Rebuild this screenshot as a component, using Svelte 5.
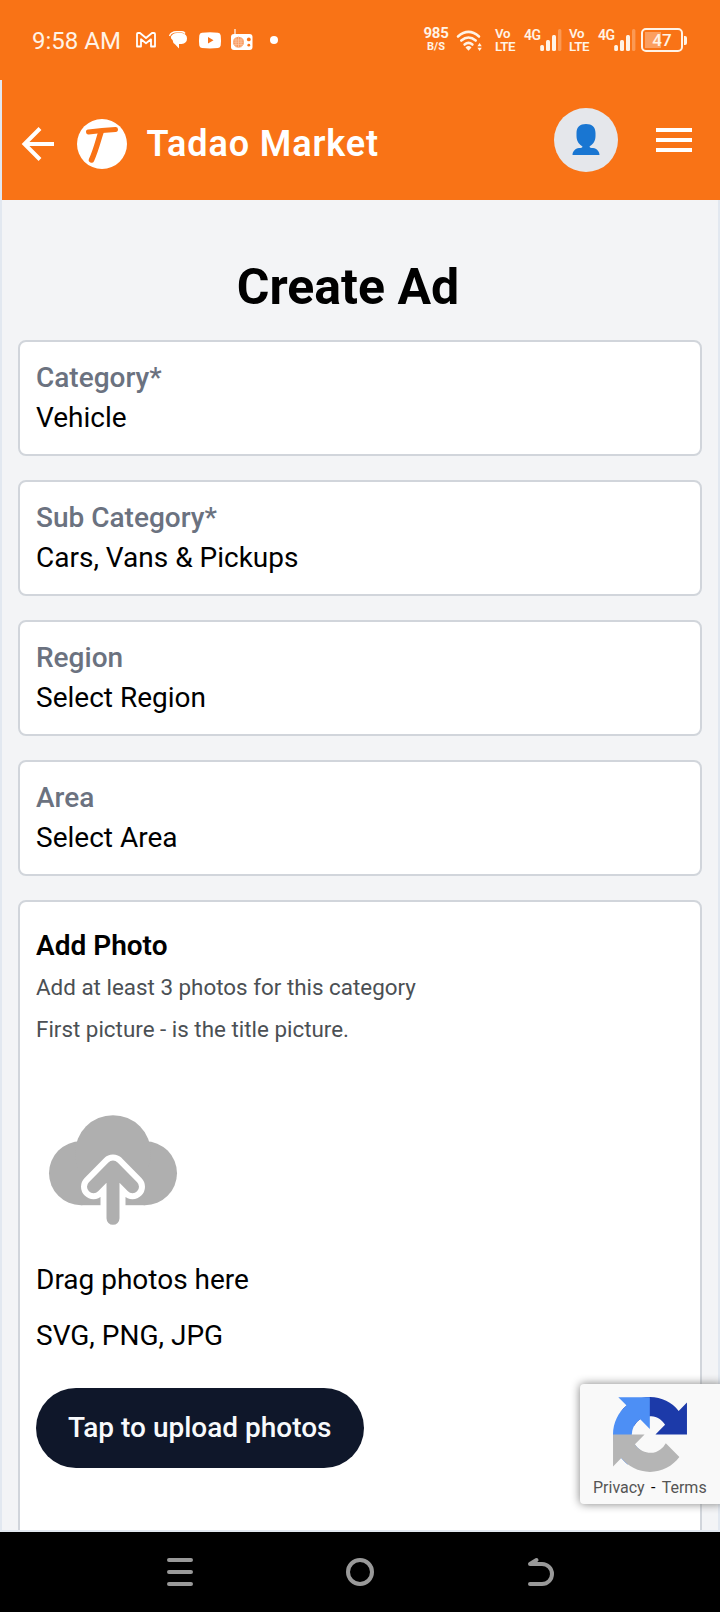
<script>
  const fields = [
    { label: 'Category*', value: 'Vehicle' },
    { label: 'Sub Category*', value: 'Cars, Vans & Pickups' },
    { label: 'Region', value: 'Select Region' },
    { label: 'Area', value: 'Select Area' }
  ];
</script>

{#snippet signal()}
  <svg class="signal" width="38" height="30" viewBox="0 0 38 30">
    <g fill="#fff3e6">
      <rect x="16.2" y="21" width="3.8" height="6" rx="1.5" />
      <rect x="22" y="16" width="4" height="11" rx="1.5" />
      <rect x="28" y="11" width="4" height="16" rx="1.5" />
      <rect x="34" y="5" width="3.4" height="22" rx="1.5" opacity=".3" />
    </g>
  </svg>
{/snippet}

<div class="screen">
  <div class="status">
    <span class="clock">9:58 AM</span>
    <svg class="mail" width="20" height="16" viewBox="0 0 20 16">
      <path d="M1 14.5V2Q1 1 2 1H4L10 6L16 1H18Q19 1 19 2V14.5H15V7.3L10 11.3L5 7.3V14.5Z" fill="none" stroke="#fff" stroke-width="1.8" stroke-linejoin="round" />
    </svg>
    <svg class="chat" width="19" height="18" viewBox="0 0 19 18">
      <path d="M.5 5C1.8 1.8 4.5.8 7.5.8H13Q15 1 16 2.5" fill="none" stroke="#fff" stroke-width="1.4" />
      <path d="M1.8 5.8Q3.5 2 8 2H13Q18 3 18 7.6Q18 12.6 12.5 13H10V17.5L6 13.2Q3.8 12 3.6 9Q1.8 8 1.8 5.8Z" fill="#fff" />
    </svg>
    <svg class="video" width="22" height="17" viewBox="0 0 22 17">
      <path fill-rule="evenodd" fill="#fff" d="M3 .7Q11-.2 19 .7Q21.4 1 21.7 3.4Q22.3 8.5 21.7 13.4Q21.4 15.7 19 16Q11 16.8 3 16Q.6 15.7.3 13.4Q-.3 8.5.3 3.4Q.6 1 3 .7ZM9 5V11.5L14.5 8.3Z" />
    </svg>
    <svg class="radio" width="23" height="22" viewBox="0 0 23 22">
      <path d="M5 0V6" stroke="#fff" stroke-width="1.2" />
      <rect x="1" y="5" width="21.5" height="16" rx="3" fill="#fff" />
      <circle cx="8.5" cy="13.2" r="5.5" fill="#f9985c" />
      <path d="M6 8V18.5M8.5 7.5V19M11 8V18.5M3 11H14M3 13.2H14M3 15.4H14" stroke="#fcc9a6" stroke-width=".7" />
      <circle cx="18.8" cy="10.4" r="1.9" fill="#f97316" />
      <circle cx="18.8" cy="16.2" r="1.4" fill="#f97316" />
    </svg>
    <span class="dot"></span>
    <span class="speed"><b>985</b><i>B/S</i></span>
    <svg class="wifi" width="27" height="22" viewBox="0 0 27 22">
      <g fill="none" stroke="#fff3e6" stroke-width="2.6" stroke-linecap="round">
        <path d="M2 6.5Q12.5-2.6 23 6.5M5.3 10.5Q12.5 4.5 19.7 10.5M8.6 14.5Q12.5 11.3 16.4 14.5" />
      </g>
      <path d="M9.5 17.5Q12.5 14.7 15.5 17.5L12.5 20.8Z" fill="#fff3e6" />
      <path d="M21.4 16.2L23.6 13L25.8 16.2ZM21.4 17.8L23.6 21L25.8 17.8Z" fill="#fff3e6" />
    </svg>
    <span class="volte one">Vo<br />LTE</span>
    <span class="cell"><em>4G</em>{@render signal()}</span>
    <span class="volte two">Vo<br />LTE</span>
    <span class="cell"><em>4G</em>{@render signal()}</span>
    <span class="battery"><span>47</span></span>
    <span class="cap"></span>
  </div>

  <header>
    <svg class="back" width="34" height="34" viewBox="0 0 34 34">
      <path d="M32 17H3M18 1.5L2.5 17L18 32.5" fill="none" stroke="#fff" stroke-width="4" />
    </svg>
    <svg class="logo" width="50" height="50" viewBox="0 0 50 50">
      <circle cx="25" cy="25" r="25" fill="#fff" />
      <path d="M11.5 13Q25 11.2 38.5 10.5" fill="none" stroke="#f97316" stroke-width="5" stroke-linecap="round" />
      <path d="M24 13C21.5 20 19.5 30 14.5 41" fill="none" stroke="#f97316" stroke-width="5.5" stroke-linecap="round" />
    </svg>
    <span class="brand">Tadao Market</span>
    <span class="avatar">
      <svg width="28" height="32" viewBox="0 0 28 32">
        <path fill="#1976d2" d="M14 0C20 0 23.5 3 23.5 9V12C23.5 18 20 21 17.5 22.5C17.5 24 19 24 21 24C25 24.5 27.5 27.5 27.5 31H.5C.5 27.5 3 24.5 7 24C9 24 10.5 24 10.5 22.5C8 21 4.5 18 4.5 12V9C4.5 3 8 0 14 0Z" />
      </svg>
    </span>
    <span class="menu"><span></span><span></span><span></span></span>
  </header>

  <main>
    <h1>Create Ad</h1>
    <div class="form">
      {#each fields as f}
        <div class="field">
          <div class="label">{f.label}</div>
          <div>{f.value}</div>
        </div>
      {/each}
      <section class="photos">
        <h2>Add Photo</h2>
        <p class="hint">Add at least 3 photos for this category</p>
        <p class="hint second">First picture - is the title picture.</p>
        <svg class="cloud" width="130" height="112" viewBox="48 1114 130 112">
          <g fill="#afafaf">
            <circle cx="81" cy="1173.2" r="32" />
            <circle cx="145" cy="1173.2" r="32" />
            <circle cx="113" cy="1153.2" r="38" />
            <rect x="81" y="1160" width="64" height="45.2" />
          </g>
          <g fill="none" stroke-linecap="round" stroke-linejoin="round">
            <path d="M93.5 1186.7L113 1167L132.5 1186.7M113 1168V1218" stroke="#fff" stroke-width="25" />
            <path d="M93.5 1186.7L113 1167L132.5 1186.7M113 1168V1218.3" stroke="#afafaf" stroke-width="13" />
          </g>
        </svg>
        <p class="drag">Drag photos here</p>
        <p class="types">SVG, PNG, JPG</p>
        <button>Tap to upload photos</button>
      </section>
    </div>
  </main>

  <aside>
    <svg width="74" height="75" viewBox="0 0 64 64" preserveAspectRatio="none">
      <path fill="#1c3aa9" d="M64 31.955l-.033-1.370V4.687l-7.160 7.160C50.948 4.674 42.033.093 32.050.093c-10.400 0-19.622 4.960-25.458 12.640l11.736 11.860a15.550 15.550 0 0 1 4.754-5.334c2.050-1.600 4.952-2.906 8.968-2.906.485 0 .860.057 1.135.163 4.976.393 9.288 3.140 11.828 7.124l-8.307 8.307L64 31.953" />
      <path fill="#4d8ff5" d="M31.862.094l-1.370.033H4.594l7.160 7.160C4.580 13.147 0 22.060 0 32.046c0 10.400 4.960 19.622 12.640 25.458L24.500 45.768a15.550 15.550 0 0 1-5.334-4.754c-1.600-2.050-2.906-4.952-2.906-8.968 0-.485.057-.860.163-1.135.393-4.976 3.140-9.288 7.124-11.828l8.307 8.307L31.860.095" />
      <path fill="#b5b5b5" d="M.001 32.045l.033 1.370v25.898l7.160-7.160c5.860 7.173 14.774 11.754 24.760 11.754 10.400 0 19.622-4.960 25.458-12.640l-11.736-11.860a15.550 15.550 0 0 1-4.754 5.334c-2.050 1.600-4.952 2.906-8.968 2.906-.485 0-.860-.057-1.135-.163-4.976-.393-9.288-3.140-11.828-7.124l8.307-8.307c-10.522.040-22.400.066-27.295-.005" />
    </svg>
    <div class="legal"><span>Privacy</span><b>-</b><span>Terms</span></div>
  </aside>

  <nav>
    <svg width="28" height="30" viewBox="0 0 28 30"><path d="M3 3H25M3 15H25M3 27H25" stroke="#999" stroke-width="4" stroke-linecap="round" /></svg>
    <svg width="28" height="30" viewBox="0 0 28 30"><circle cx="14" cy="15" r="12" fill="none" stroke="#999" stroke-width="4" /></svg>
    <svg width="28" height="30" viewBox="0 0 28 30"><path d="M4 27H16A10 10 0 0 0 16 7H4L10.5 3" fill="none" stroke="#999" stroke-width="4" stroke-linecap="round" stroke-linejoin="round" /></svg>
  </nav>
</div>

<style>
  :global(body) { margin: 0; }
  * { box-sizing: border-box; }
  .screen { position: relative; width: 720px; height: 1612px; display: flex; flex-direction: column; overflow: hidden; font-family: Roboto, sans-serif; background: #f97316; }
  .screen svg { display: block; flex: none; overflow: visible; }

  .status { height: 80px; display: flex; align-items: flex-start; color: #fff3e6; white-space: nowrap; }
  .status > * { flex: none; }
  .clock { width: 104px; margin-left: 32px; padding-top: 27px; font-size: 24px; line-height: 28px; }
  .mail { margin-top: 32px; }
  .chat { margin: 31px 0 0 13px; }
  .video { margin: 32px 0 0 11px; }
  .radio { margin: 29px 0 0 9px; }
  .dot { width: 8px; height: 8px; margin: 36px 0 0 17px; border-radius: 50%; background: #fff; }
  .speed { width: 26px; margin: 25px 0 0 145px; display: flex; flex-direction: column; align-items: center; font-weight: 700; }
  .speed b { font-size: 15px; line-height: 16px; font-weight: 700; letter-spacing: -.3px; }
  .speed i { font-size: 11px; line-height: 11px; font-style: normal; }
  .wifi { margin: 30px 0 0 7px; }
  .volte { width: 21px; margin: 28px 0 0 12px; font-size: 13.3px; line-height: 12.5px; font-weight: 600; letter-spacing: -.4px; }
  .cell { display: flex; width: 38px; margin: 24px 0 0 8px; }
  .cell em { width: 0; padding-top: 4px; font-size: 14px; line-height: 14px; font-style: normal; font-weight: 600; letter-spacing: -.4px; }
  .two { margin-left: 7px; }
  .battery { width: 42px; height: 24px; margin: 28px 0 0 5px; border: 2px solid #fff3e6; border-radius: 5px; padding: 2px; display: flex; background: linear-gradient(#fb9f60, #fb9f60) 2px 2px / 16px 16px no-repeat; }
  .battery span { width: 34px; text-align: center; font-size: 17px; line-height: 17px; font-weight: 500; }
  .cap { width: 3px; height: 9px; margin: 36px 0 0 1px; border-radius: 0 2px 2px 0; background: #fff3e6; }

  header { height: 120px; margin-left: 2px; display: flex; align-items: flex-start; box-shadow: -2px 0 #e2e8f0; background: #f97316; color: #fff; }
  header > * { flex: none; }
  .back { margin: 47px 0 0 20px; }
  .logo { margin: 38.5px 0 0 21px; }
  .brand { width: 400px; margin: 43px 0 0 19.5px; font-size: 36px; line-height: 42px; font-weight: 600; letter-spacing: .9px; }
  .avatar { width: 64px; height: 64px; margin: 28px 0 0 7px; border-radius: 50%; background: #e5e7eb; display: flex; justify-content: center; padding-top: 16px; }
  .menu { width: 36px; margin: 48px 0 0 38px; display: flex; flex-direction: column; gap: 6px; }
  .menu span { height: 4px; background: #fff; }

  main { height: 1332px; overflow: hidden; padding: 0 16px; border: 2px solid #e2e8f0; border-top: 0; background: #f3f4f6; color: #000; font-size: 28px; line-height: 40px; }
  h1 { margin: 59px 24px 25px 0; text-align: center; font-size: 50px; line-height: 56px; font-weight: 700; }
  .form { display: flex; flex-direction: column; gap: 24px; }
  .field { height: 116px; padding: 16px; border: 2px solid #d1d5db; border-radius: 8px; background: #fff; }
  .label { color: #6b7280; font-weight: 500; }
  .photos { height: 700px; display: flex; flex-direction: column; align-items: flex-start; padding: 24px 16px; border: 2px solid #d1d5db; border-radius: 8px; background: #fff; }
  p, h2 { margin: 0; }
  h2 { font-size: 28px; line-height: 40px; font-weight: 600; }
  .hint { margin-top: 3px; font-size: 22.4px; line-height: 36px; color: #4b5054; }
  .second { margin-top: 6px; }
  .cloud { margin: 67px 0 0 12px; }
  .drag { margin-top: 34px; }
  .types { margin-top: 16px; }
  button { height: 80px; margin: 32px 0 0; padding: 0 32px; border: 0; border-radius: 40px; background: #0f172a; color: #f8fafc; font: 500 28px/80px Roboto, sans-serif; white-space: nowrap; }
  aside { position: absolute; left: 580px; top: 1384px; width: 144px; height: 120px; padding: 13px 0 0 33px; border-radius: 4px; background: #f9f9f9; box-shadow: 0 0 10px #808080; }
  .legal { display: flex; margin: 7px 0 0 -20px; color: #555; font-size: 16px; line-height: 18px; white-space: nowrap; }
  .legal b { width: 17px; text-align: center; font-weight: 400; color: #000; }

  nav { height: 80px; display: grid; grid-template-columns: repeat(3, 28px); gap: 152px; justify-content: center; padding-top: 25px; background: #000; }
</style>
